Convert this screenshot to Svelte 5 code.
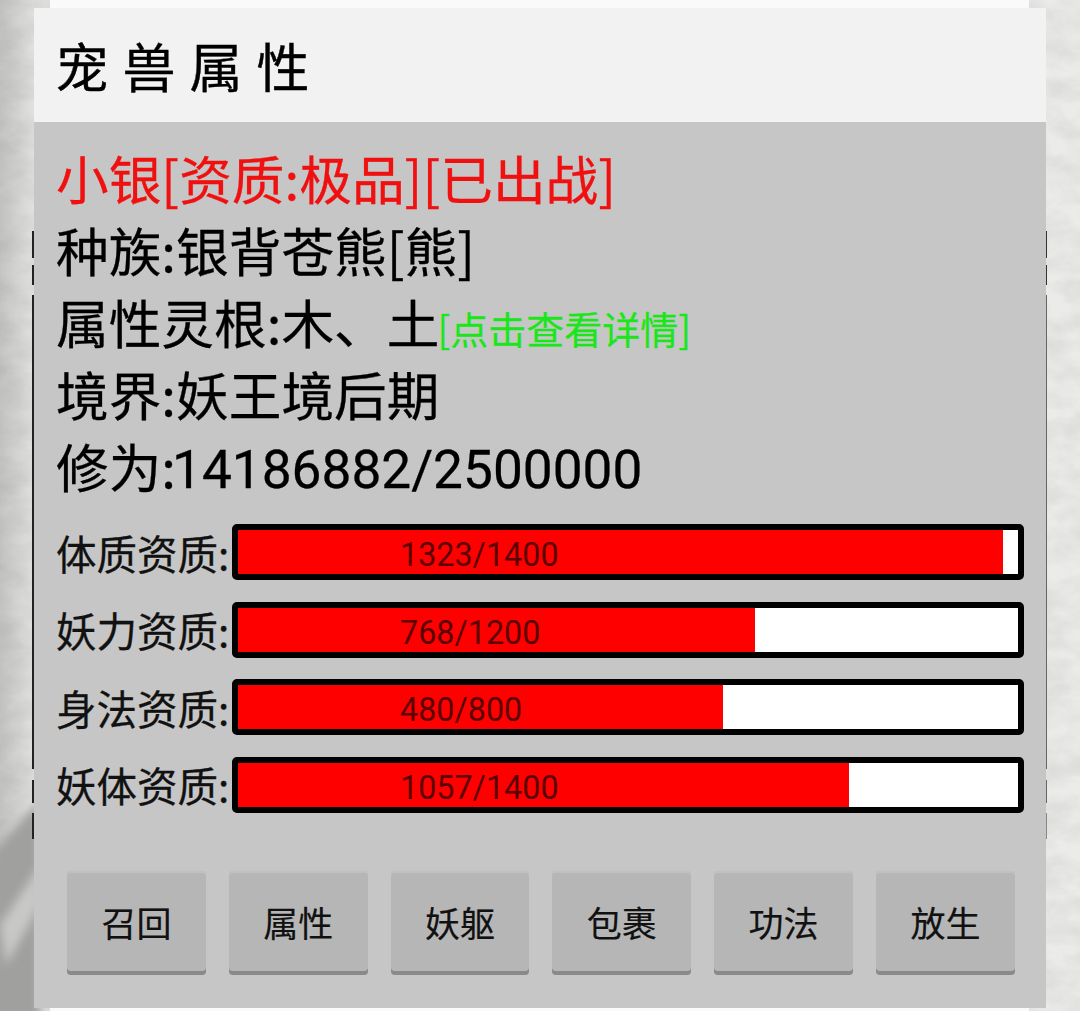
<script>
  const stats = [
    { label: '体质资质:', cur: 1323, max: 1400, fill: 765 },
    { label: '妖力资质:', cur: 768, max: 1200, fill: 517 },
    { label: '身法资质:', cur: 480, max: 800, fill: 485 },
    { label: '妖体资质:', cur: 1057, max: 1400, fill: 611 },
  ];
  const actions = ['召回', '属性', '妖躯', '包裹', '功法', '放生'];
</script>

<div class="page">
  <!-- paper texture behind the dialog -->
  <svg class="paper" width="1080" height="1011" aria-hidden="true">
    <defs>
      <filter id="grain" x="0" y="0" width="100%" height="100%">
        <feTurbulence type="fractalNoise" baseFrequency="0.03 0.05" numOctaves="4" seed="7" />
        <feColorMatrix values="0 0 0 0 0  0 0 0 0 0  0 0 0 0 0  1.2 0 0 0 -0.35" />
      </filter>
      <filter id="soft" x="-50%" y="-50%" width="200%" height="200%"><feGaussianBlur stdDeviation="5" /></filter>
      <linearGradient id="fade" x1="0" x2="1">
        <stop offset="0" stop-color="#8c8c8c" stop-opacity="0.4" />
        <stop offset="0.03" stop-color="#8c8c8c" stop-opacity="0.12" />
        <stop offset="1" stop-color="#8c8c8c" stop-opacity="0" />
      </linearGradient>
    </defs>
    <rect width="1080" height="1011" fill="#ebebe9" />
    <rect width="1080" height="1011" fill="url(#fade)" />
    <rect width="1080" height="1011" filter="url(#grain)" opacity="0.09" />
    <polygon points="40,800 40,1020 -10,1020 -10,855" fill="#a0a09e" filter="url(#soft)" />
    <polygon points="0,925 40,865 40,905 6,965" fill="#c8c8c6" filter="url(#soft)" />
  </svg>
  <div class="backing"></div>
  <div class="rail"></div>
  <div class="rail right"></div>
  <div class="panel">
    <header>宠兽属性</header>
    <div class="info">
      <div class="line red">小银[资质:极品][已出战]</div>
      <div class="line">种族:银背苍熊[熊]</div>
      <div class="line">属性灵根:木、土<span class="link">[点击查看详情]</span></div>
      <div class="line">境界:妖王境后期</div>
      <div class="line">修为:<span class="num">14186882/2500000</span></div>
    </div>
    <div class="stats">
      {#each stats as s}
        <div class="row">
          <span class="label">{s.label}</span>
          <div class="bar">
            <div class="fill" style="width: {s.fill}px"></div>
            <span class="val">{s.cur}/{s.max}</span>
          </div>
        </div>
      {/each}
    </div>
    <div class="actions">
      {#each actions as a}
        <button>{a}</button>
      {/each}
    </div>
  </div>
</div>

<style>
  :global(body) {
    margin: 0;
    font-family: "Noto Sans CJK SC", "Noto Sans", sans-serif;
  }

  .page {
    position: relative;
    width: 1080px;
    height: 1011px;
    box-sizing: border-box;
    padding: 8px 34px 3px;
    overflow: hidden;
    background: #ebebe9;
  }

  .paper {
    position: absolute;
    top: 0;
    left: 0;
  }

  .backing {
    position: absolute;
    top: 0;
    bottom: 0;
    left: 50px;
    right: 51px;
    background: #fafafa;
  }

  .rail {
    position: absolute;
    top: 231px;
    left: 32px;
    width: 3px;
    height: 608px;
    background: linear-gradient(to bottom,
      #222 0 27px, transparent 27px 34px,
      #222 34px 54px, transparent 54px 64px,
      #222 64px 538px, transparent 538px 549px,
      #222 549px 572px, transparent 572px 582px,
      #222 582px 607px);
  }

  .rail.right {
    left: 1045px;
    width: 2px;
    background: linear-gradient(to bottom,
      #333 0 27px, transparent 27px 34px,
      #333 34px 54px, transparent 54px 64px,
      #666 64px 538px, transparent 538px 549px,
      #666 549px 572px, transparent 572px 582px,
      #888 582px 607px);
  }

  .panel {
    position: relative;
    height: 1000px;
    display: flex;
    flex-direction: column;
    background: #c6c6c6;
  }

  header {
    height: 114px;
    flex: none;
    box-sizing: border-box;
    padding: 23px 0 0 21.5px;
    background: #f2f2f2;
    color: #000;
    font-size: 53px;
    line-height: 68px;
    letter-spacing: 14px;
    -webkit-text-stroke: 0.4px #000;
  }

  .info {
    padding: 19px 0 0 22px;
  }

  .line {
    height: 72px;
    font-size: 52.7px;
    line-height: 72px;
    color: #000;
    white-space: nowrap;
    -webkit-text-stroke: 0.3px currentColor;
  }

  .red {
    color: #f01010;
  }

  .link {
    font-size: 38px;
    margin-left: -2px;
    color: #1be51b;
  }

  .num {
    font-family: Roboto, sans-serif;
    font-size: 53.2px;
    margin-left: -4px;
  }

  .stats {
    display: flex;
    flex-direction: column;
    gap: 21.5px;
    padding: 23px 22px 0 22px;
  }

  .row {
    display: flex;
    align-items: center;
    height: 56px;
  }

  .label {
    width: 176px;
    flex: none;
    font-size: 40.5px;
    color: #111;
    white-space: nowrap;
    -webkit-text-stroke: 0.3px currentColor;
  }

  .bar {
    position: relative;
    flex: 1;
    height: 56px;
    box-sizing: border-box;
    border: 6px solid #000;
    border-radius: 5px;
    background: #fff;
  }

  .fill {
    height: 100%;
    background: #ff0000;
  }

  .val {
    position: absolute;
    left: 162px;
    top: 3px;
    font-family: Roboto, sans-serif;
    font-size: 32.3px;
    line-height: 44px;
    color: #5a0000;
  }

  .actions {
    display: flex;
    gap: 23px;
    padding: 58px 0 0 33px;
  }

  button {
    width: 138.8px;
    height: 104px;
    padding: 0 0 3px;
    border: none;
    border-radius: 4px;
    background: #b6b6b6;
    box-shadow: inset 0 -4px 0 #8a8a8a, inset 0 2px 0 #c0c0c0;
    font-family: inherit;
    font-size: 35px;
    color: #111;
    -webkit-text-stroke: 0.2px currentColor;
  }
</style>
